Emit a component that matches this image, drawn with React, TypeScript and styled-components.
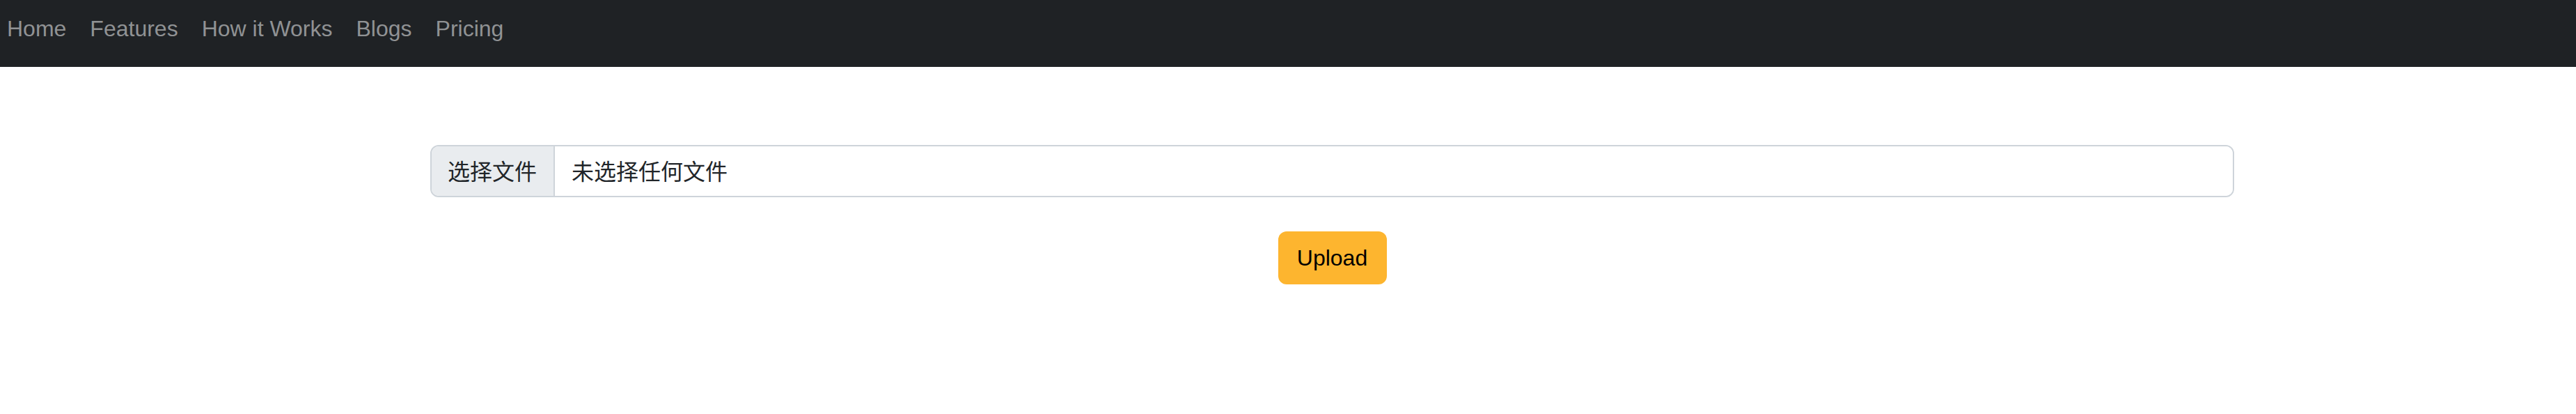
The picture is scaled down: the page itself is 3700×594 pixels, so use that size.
import React from "react";
import styled, { createGlobalStyle } from "styled-components";

const GlobalStyle = createGlobalStyle`
  html, body {
    margin: 0;
    padding: 0;
    background: #ffffff;
    font-family: "Liberation Sans", Arial, "Noto Sans CJK SC", sans-serif;
    color: #212529;
  }
  * { box-sizing: border-box; }
`;

const Navbar = styled.nav`
  height: 96px;
  background: #1f2225;
  display: flex;
  align-items: flex-start;
  padding: 17px 0 0 10px;
`;

const NavList = styled.ul`
  display: flex;
  gap: 34px;
  list-style: none;
  margin: 0;
  padding: 0;
`;

const NavLink = styled.a`
  font-size: 32px;
  line-height: 48px;
  color: #909294;
  text-decoration: none;
  white-space: nowrap;
`;

const Main = styled.main`
  padding: 112px 0 0 618px;
`;

const Container = styled.div`
  width: 2591px;
  display: flex;
  flex-direction: column;
  align-items: center;
  gap: 49px;
`;

const InputGroup = styled.label`
  width: 100%;
  height: 75px;
  display: flex;
  border: 2px solid #ced4da;
  border-radius: 12px;
  overflow: hidden;
  font-family: "Liberation Sans", "Noto Sans CJK SC", sans-serif;
  font-size: 32px;
  line-height: 48px;
  color: #212529;
`;

const FileButton = styled.span`
  display: flex;
  align-items: center;
  padding: 3px 24px 0 23px;
  background: #e9ecef;
  border-right: 2px solid #ced4da;
  white-space: nowrap;
`;

const FileName = styled.span`
  display: flex;
  align-items: center;
  padding: 3px 24px 0;
  flex: 1;
  background: #ffffff;
`;

const UploadButton = styled.button`
  width: 156px;
  height: 76px;
  border: none;
  border-radius: 12px;
  background: #fdb52f;
  color: #000000;
  font-family: "Liberation Sans", Arial, sans-serif;
  font-size: 32px;
  line-height: 48px;
  padding: 0;
  cursor: pointer;
`;

const links = ["Home", "Features", "How it Works", "Blogs", "Pricing"];

export default function App() {
  return (
    <>
      <GlobalStyle />
      <Navbar>
        <NavList>
          {links.map((l) => (
            <li key={l}>
              <NavLink href="#">{l}</NavLink>
            </li>
          ))}
        </NavList>
      </Navbar>
      <Main>
        <Container>
          <InputGroup>
            <FileButton>选择文件</FileButton>
            <FileName>未选择任何文件</FileName>
          </InputGroup>
          <UploadButton>Upload</UploadButton>
        </Container>
      </Main>
    </>
  );
}
